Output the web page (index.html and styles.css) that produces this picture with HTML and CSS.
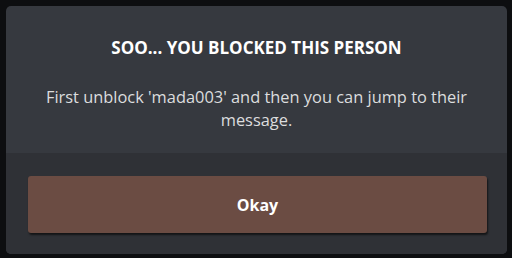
FILE: index.html
```html
<!DOCTYPE html>
<html lang="en">
<head>
  <meta charset="UTF-8">
  <title>Blocked</title>
  <link rel="stylesheet" href="styles.css">
</head>
<body>
  <div class="modal">
    <div class="modal-body">
      <h2 class="modal-title">SOO... YOU BLOCKED THIS PERSON</h2>
      <p class="modal-text">First unblock 'mada003' and then you can jump to their message.</p>
    </div>
    <div class="modal-footer">
      <button class="okay-btn">Okay</button>
    </div>
  </div>
</body>
</html>
```

FILE: styles.css
```css
* {
  margin: 0;
  padding: 0;
  box-sizing: border-box;
}

body {
  background-color: #0d0e10;
  padding: 6px 5px 4px 6px;
  height: 258px;
  font-family: "Open Sans", sans-serif;
}

.modal {
  width: 501px;
  height: 248px;
  background-color: #36393f;
  border-radius: 5px;
  display: flex;
  flex-direction: column;
  overflow: hidden;
}

.modal-body {
  height: 147px;
  padding: 30px 34px 0;
  text-align: center;
}

.modal-title {
  color: #ffffff;
  font-size: 17px;
  font-weight: 700;
  line-height: 24px;
  margin-bottom: 25px;
}

.modal-text {
  color: #dcddde;
  font-size: 16.4px;
  line-height: 23px;
}

.modal-footer {
  flex: 1;
  background-color: #2f3136;
  padding: 23px 20px 21px 22px;
  display: flex;
}

.okay-btn {
  flex: 1;
  border: none;
  border-radius: 3px;
  background-color: #6b4c43;
  color: #ffffff;
  font-family: "Open Sans", sans-serif;
  font-size: 16px;
  font-weight: 700;
  box-shadow: 1px 2px 2px rgba(0, 0, 0, 0.6);
}
```
